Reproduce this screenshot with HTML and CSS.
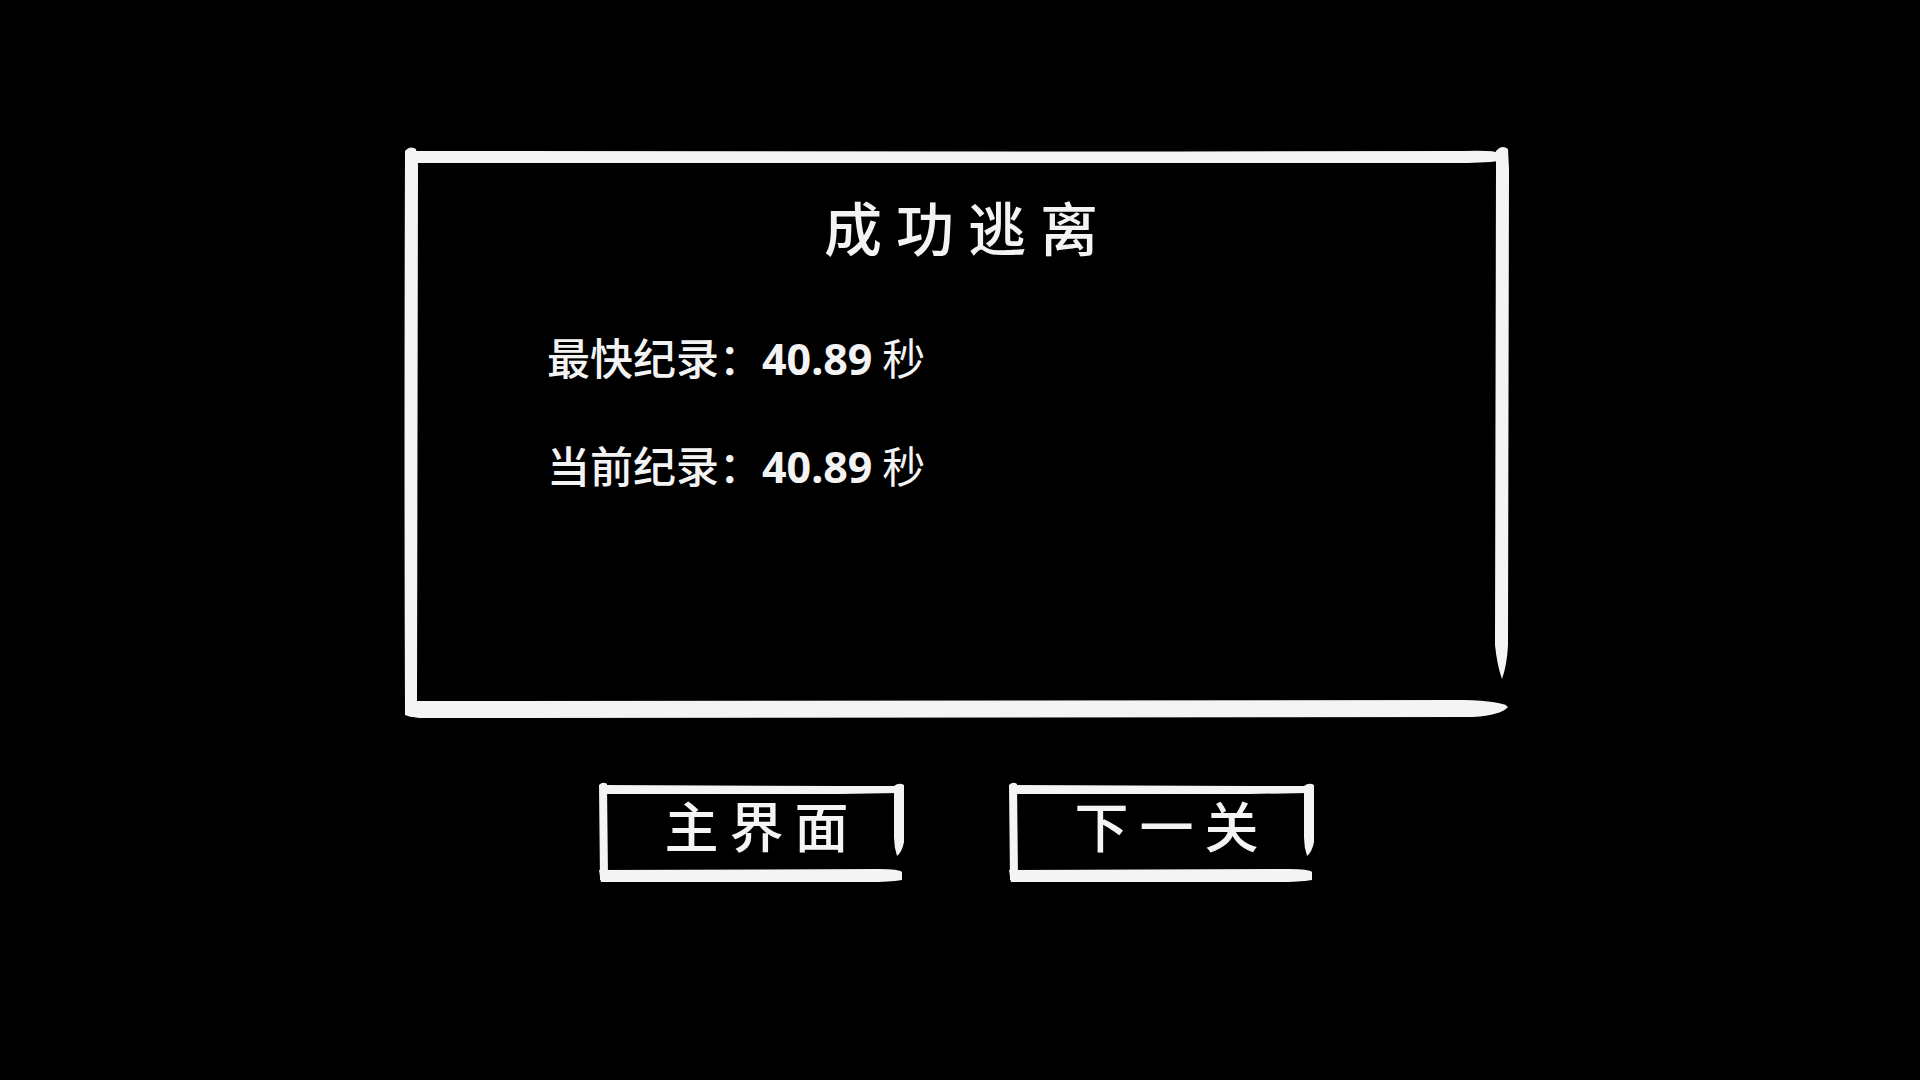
FILE: index.html
```html
<!DOCTYPE html>
<html lang="zh-CN">
<head>
<meta charset="utf-8">
<title>成功逃离</title>
<link rel="stylesheet" href="styles.css">
</head>
<body>
<main class="screen">
  <section class="panel">
    <svg class="frame" viewBox="0 0 1106 573" preserveAspectRatio="none" aria-hidden="true">
      <!-- left post -->
      <path d="M2 6 Q7 0 13 4 L15 20 L14 560 Q14 572 8 572 L2 570 Q1 300 2 6 Z" />
      <!-- top bar -->
      <path d="M12 6 L780 6.5 L1060 6 Q1092 5 1096 8 L1096 16 Q1080 18 1050 18 L12 18 Z" />
      <!-- right post -->
      <path d="M1093 6 Q1099 -1 1105 4 L1106 24 L1105 500 Q1104 520 1099 534 Q1094 520 1092 500 L1093 20 Z" />
      <!-- bottom bar -->
      <path d="M2 556 L1060 555 Q1100 556 1105 562 Q1098 570 1070 572 L20 573 Q4 573 2 566 Z" />
    </svg>
    <h1 class="title">成功逃离</h1>
    <div class="stats">
      <p class="stat"><span class="label">最快纪录：</span><span class="num">40.89</span> <span class="unit">秒</span></p>
      <p class="stat"><span class="label">当前纪录：</span><span class="num">40.89</span> <span class="unit">秒</span></p>
    </div>
  </section>

  <nav class="actions">
    <button class="btn" type="button">
      <svg class="frame" viewBox="0 0 305 100" preserveAspectRatio="none" aria-hidden="true">
        <path d="M0 3 Q4 -1 8 2 L9 96 Q6 100 1 98 Z" />
        <path d="M4 3 L240 4 L300 4 L300 11 L240 12 L4 12 Z" />
        <path d="M295 4 Q300 0 305 3 L305 60 Q303 70 298 74 Q295 65 295 55 Z" />
        <path d="M0 88 L280 87 Q300 87 303 90 L303 98 Q290 100 270 100 L2 100 Z" />
      </svg>
      <span class="btn-text">主界面</span>
    </button>
    <button class="btn" type="button">
      <svg class="frame" viewBox="0 0 305 100" preserveAspectRatio="none" aria-hidden="true">
        <path d="M0 3 Q4 -1 8 2 L9 96 Q6 100 1 98 Z" />
        <path d="M4 3 L240 4 L300 4 L300 11 L240 12 L4 12 Z" />
        <path d="M295 4 Q300 0 305 3 L305 60 Q303 70 298 74 Q295 65 295 55 Z" />
        <path d="M0 88 L280 87 Q300 87 303 90 L303 98 Q290 100 270 100 L2 100 Z" />
      </svg>
      <span class="btn-text">下一关</span>
    </button>
  </nav>
</main>
</body>
</html>
```

FILE: styles.css
```css
html, body {
  margin: 0;
  padding: 0;
  background: #000;
  height: 100%;
}

body {
  color: #f3f3f3;
  font-family: "Noto Sans CJK SC", "Noto Sans", sans-serif;
  overflow: hidden;
}

.screen {
  display: flex;
  flex-direction: column;
  align-items: center;
  padding-top: 145px;
  padding-right: 8px;
  box-sizing: border-box;
  width: 1920px;
  height: 1080px;
}

.panel {
  position: relative;
  width: 1106px;
  height: 573px;
  box-sizing: border-box;
  padding-top: 52px;
}

.frame {
  position: absolute;
  inset: 0;
  width: 100%;
  height: 100%;
  fill: #f4f4f4;
  pointer-events: none;
}

.title {
  margin: 0;
  padding-left: 10px;
  text-align: center;
  font-size: 58px;
  line-height: 1;
  font-weight: 500;
  letter-spacing: 14px;
  text-indent: 14px;
}

.stats {
  margin-top: 80px;
  padding-left: 144px;
  display: flex;
  flex-direction: column;
  gap: 63px;
}

.stat {
  margin: 0;
  font-size: 43px;
  line-height: 1;
  font-weight: 500;
  white-space: pre;
}

.num {
  font-family: "Noto Sans", "Noto Sans CJK SC", sans-serif;
  font-weight: 700;
}

.unit {
  font-weight: 400;
}

.actions {
  display: flex;
  gap: 105px;
  margin-top: 64px;
}

.btn {
  position: relative;
  width: 305px;
  height: 100px;
  background: transparent;
  border: 0;
  padding: 0;
  color: #f4f4f4;
  font-family: "Noto Sans CJK SC", "Noto Sans", sans-serif;
  display: flex;
  align-items: center;
  justify-content: center;
  cursor: pointer;
}

.btn-text {
  font-size: 54px;
  line-height: 1;
  font-weight: 500;
  letter-spacing: 11px;
  text-indent: 11px;
  margin-left: 11px;
  margin-top: -14px;
}
```
